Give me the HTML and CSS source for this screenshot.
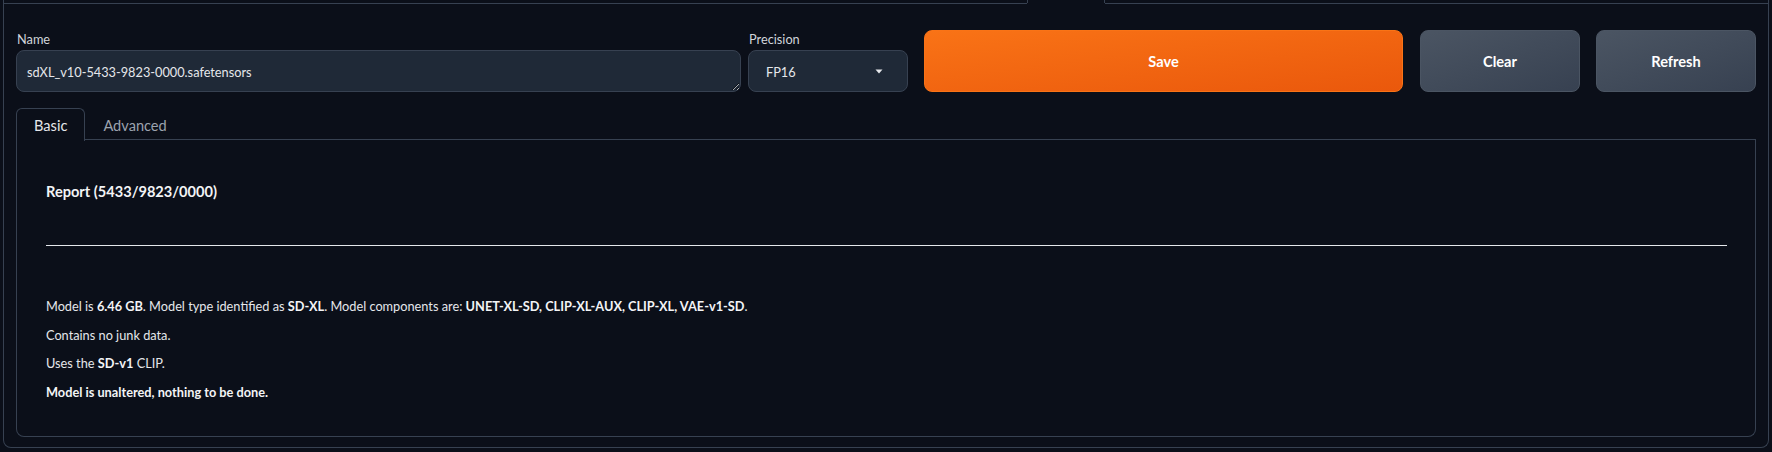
FILE: index.html
```html
<!DOCTYPE html>
<html lang="en">
<head>
<meta charset="utf-8">
<title>Model Inspector</title>
<link rel="stylesheet" href="styles.css">
</head>
<body>
<div class="parent-nav">
  <div class="nav-line nav-left"></div>
  <div class="nav-selected"></div>
  <div class="nav-line nav-right"></div>
</div>
<div class="outer">
  <div class="top-row">
    <div class="field name-field">
      <label class="field-label" for="name">Name</label>
      <textarea id="name" class="text-input" rows="1" spellcheck="false">sdXL_v10-5433-9823-0000.safetensors</textarea>
    </div>
    <div class="field precision-field">
      <span class="field-label">Precision</span>
      <div class="dropdown">
        <span class="dropdown-value">FP16</span>
        <svg class="caret" width="8" height="5" viewBox="0 0 8 5"><path d="M0.5 0.5 H7.5 L4 4.5 Z" fill="#e5e7eb"/></svg>
      </div>
    </div>
    <button class="btn btn-primary save-btn">Save</button>
    <button class="btn btn-secondary">Clear</button>
    <button class="btn btn-secondary">Refresh</button>
  </div>
  <div class="tabs">
    <div class="tab-nav">
      <button class="tab tab-selected">Basic</button>
      <button class="tab">Advanced</button>
    </div>
    <div class="tab-panel">
      <h3 class="report-title">Report (5433/9823/0000)</h3>
      <hr class="report-rule">
      <div class="report-lines">
        <p>Model is <b>6.46 GB</b>. Model type identified as <b>SD-XL</b>. Model components are: <b>UNET-XL-SD, CLIP-XL-AUX, CLIP-XL, VAE-v1-SD</b>.</p>
        <p>Contains no junk data.</p>
        <p>Uses the <b>SD-v1</b> CLIP.</p>
        <p><b>Model is unaltered, nothing to be done.</b></p>
      </div>
    </div>
  </div>
</div>
</body>
</html>
```
FILE: styles.css
```css
* { box-sizing: border-box; }
html, body { margin: 0; padding: 0; }
body {
  background: #0b0f19;
  color: #e5e7eb;
  font-family: Lato, "Noto Sans", sans-serif;
  font-size: 12.75px;
  width: 1772px;
  height: 452px;
  overflow: hidden;
}
.parent-nav {
  display: flex;
  height: 4px;
  margin: 0 3px;
}
.nav-line { border-bottom: 1px solid #374151; }
.nav-left { width: 1024px; border-left: 1px solid #374151; }
.nav-selected {
  width: 78px;
  height: 3px;
  border-left: 1px solid #374151;
  border-right: 1px solid #374151;
}
.nav-right { flex: 1; border-right: 1px solid #374151; }
.outer {
  margin: 0 3px;
  border: 1px solid #374151;
  border-top: none;
  border-radius: 0 0 8px 8px;
  padding: 26px 12px 10px 12px;
}
.top-row {
  display: flex;
  align-items: stretch;
}
.field { display: flex; flex-direction: column; }
.name-field { width: 725px; margin-right: 7px; }
.precision-field { width: 160px; margin-right: 16px; }
.field-label {
  display: block;
  height: 20px;
  line-height: 18px;
  font-size: 12.75px;
  color: #d1d5db;
  padding-left: 1px;
}
.text-input {
  display: block;
  width: 100%;
  height: 42px;
  margin: 0;
  padding: 11px 10px 9px 10px;
  background: #1f2937;
  border: 1px solid #374151;
  border-radius: 8px;
  color: #e5e7eb;
  font-family: inherit;
  font-size: 12.75px;
  line-height: 20px;
  resize: vertical;
  outline: none;
  color-scheme: dark;
  overflow: hidden;
}
.dropdown {
  height: 42px;
  display: flex;
  align-items: center;
  justify-content: space-between;
  padding: 1px 24px 0 17px;
  background: #1f2937;
  border: 1px solid #374151;
  border-radius: 8px;
  color: #e5e7eb;
  font-size: 12.75px;
}
.caret { display: block; }
.btn {
  height: 62px;
  border-radius: 8px;
  font-family: inherit;
  font-size: 14.6px;
  font-weight: 700;
  color: #ffffff;
  cursor: pointer;
  padding: 0;
}
.btn-primary {
  background: linear-gradient(to bottom right, #f97316, #ea580c);
  border: 1px solid #f97316;
}
.save-btn { width: 479px; margin-right: 17px; }
.btn-secondary {
  width: 160px;
  background: linear-gradient(to bottom right, #4b5563, #374151);
  border: 1px solid #4b5563;
}
.btn-secondary + .btn-secondary { margin-left: 16px; }
.tabs { margin-top: 16px; }
.tab-nav {
  display: flex;
  border-bottom: 1px solid #374151;
  height: 32px;
}
.tab {
  height: 32px;
  padding: 1px 17px 0 17px;
  background: transparent;
  border: 1px solid transparent;
  border-bottom: none;
  border-radius: 6px 6px 0 0;
  font-family: inherit;
  font-size: 14.6px;
  color: #9ca3af;
  cursor: pointer;
}
.tab-selected {
  color: #e5e7eb;
  border-color: #374151;
  background: #0b0f19;
  height: 33px;
  margin-bottom: -1px;
}
.tab-panel {
  border: 1px solid #374151;
  border-top: none;
  border-radius: 0 0 8px 8px;
  padding: 40px 28px 34px 29px;
  height: 297px;
}
.report-title {
  margin: 0;
  font-size: 14.6px;
  line-height: 24px;
  font-weight: 700;
  color: #f3f4f6;
}
.report-rule {
  margin: 41px 0 0 0;
  border: none;
  border-top: 1px solid #e5e7eb;
  height: 0;
}
.report-lines {
  margin-top: 50px;
  display: flex;
  flex-direction: column;
  gap: 8.67px;
}
.report-lines p {
  margin: 0;
  font-size: 12.75px;
  line-height: 20px;
  color: #e5e7eb;
}
.report-lines b { font-weight: 700; color: #f3f4f6; }
```
